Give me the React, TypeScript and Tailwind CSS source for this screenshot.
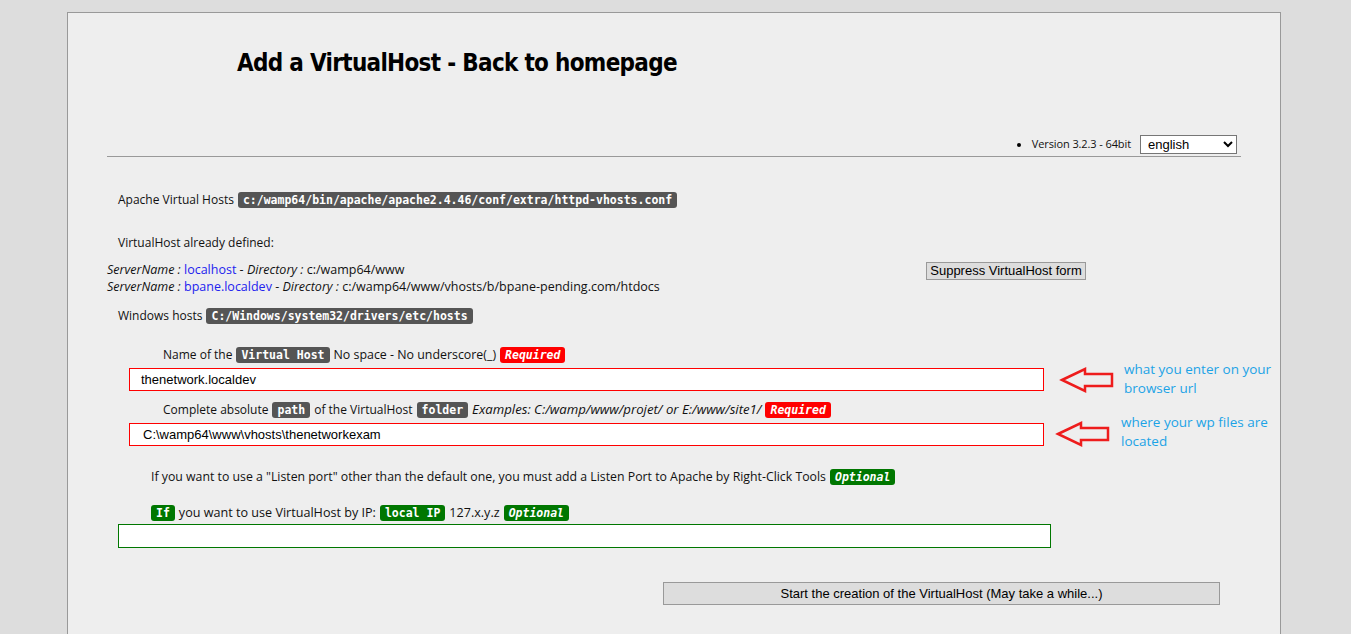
import React from 'react';

const body = "font-['Open_Sans','Noto_Sans',sans-serif]";
const mono = "font-['DejaVu_Sans_Mono','Liberation_Mono',monospace]";

function Tag({ children, tone = 'gray', italic = false }: { children: React.ReactNode; tone?: 'gray' | 'red' | 'green'; italic?: boolean }) {
  const bg = tone === 'red' ? 'bg-[#ff0000]' : tone === 'green' ? 'bg-[#007700]' : 'bg-[#555555]';
  return (
    <span
      className={`${bg} ${mono} ${italic ? 'italic' : ''} inline-block rounded-[3px] px-[5px] text-[11.5px] leading-[16px] font-semibold tracking-normal text-white`}
    >
      {children}
    </span>
  );
}

function Arrow() {
  return (
    <svg width="56" height="28" viewBox="0 0 56 28" className="shrink-0">
      <path d="M3 14 L26 3 L26 8 L53 8 L53 20 L26 20 L26 25 Z" fill="none" stroke="#ee1c1c" strokeWidth="2.5" strokeLinejoin="miter" />
    </svg>
  );
}

export default function App() {
  return (
    <div className="min-h-screen bg-[#dddddd] pt-[12px]">
      <div className={`${body} ml-[67px] w-[1214px] h-[640px] border border-[#999999] bg-[#eeeeee] text-[12px] text-[#111111]`}>
        {/* Header */}
        <h1 className="pl-[169px] pt-[36px] text-[24px] leading-[28px] font-bold text-black font-['DejaVu_Sans_Condensed','Open_Sans',sans-serif] tracking-[-0.7px]">
          Add a VirtualHost - Back to homepage
        </h1>

        <div className="mt-[58px] flex items-center justify-end pr-[43px]">
          <span className="mr-[11px] h-[4px] w-[4px] rounded-full bg-black" />
          <span className="text-[11px] tracking-[-0.1px]">Version 3.2.3 - 64bit</span>
          <select className="ml-[9px] h-[19px] w-[97px] border border-[#767676] bg-white px-[3px] text-[13px] font-['Liberation_Sans',sans-serif] text-black">
            <option>english</option>
          </select>
        </div>
        <div className="mx-[39px] mt-[2px] border-t border-[#999999]" />

        {/* Vhosts info */}
        <div className="mt-[34px] pl-[50px] flex items-center gap-[4px]">
          <span>Apache Virtual Hosts</span>
          <Tag>c:/wamp64/bin/apache/apache2.4.46/conf/extra/httpd-vhosts.conf</Tag>
        </div>
        <div className="mt-[25px] pl-[50px]">VirtualHost already defined:</div>

        <div className="mt-[9px] flex items-start pl-[39px]">
          <div className="w-[819px] text-[12.5px] leading-[17px]">
            <div>
              <i>ServerName :</i> <span className="text-[#2222ee]">localhost</span> - <i>Directory :</i> c:/wamp64/www
            </div>
            <div>
              <i>ServerName :</i> <span className="text-[#2222ee]">bpane.localdev</span> - <i>Directory :</i> c:/wamp64/www/vhosts/b/bpane-pending.com/htdocs
            </div>
          </div>
          <button className="mt-[1px] h-[18px] w-[160px] border border-[#999999] bg-[#dddddd] text-[13px] leading-[16px] font-['Liberation_Sans',sans-serif] text-black">
            Suppress VirtualHost form
          </button>
        </div>

        <div className="mt-[12px] pl-[50px] flex items-center gap-[4px]">
          <span>Windows hosts</span>
          <Tag>C:/Windows/system32/drivers/etc/hosts</Tag>
        </div>

        {/* Form */}
        <div className="mt-[21px] h-[18px] pl-[95px] flex items-center gap-[4px]">
          <span>Name of the</span>
          <Tag>Virtual Host</Tag>
          <span className="text-[12.4px]">No space - No underscore(_)</span>
          <Tag tone="red" italic>Required</Tag>
        </div>
        <div className="mt-[4px] flex h-[23px] items-start pl-[61px]">
          <div className="h-[23px] w-[915px] shrink-0 border border-[#ff0000] bg-white pl-[11px] text-[13px] leading-[21px] font-['Liberation_Sans',sans-serif] text-black">
            thenetwork.localdev
          </div>
          <div className="ml-[15px] mt-[-2px]"><Arrow /></div>
          <div className="ml-[9px] mt-[-8px] whitespace-nowrap text-[13.5px] leading-[19px] text-[#1ca3e6]">
            what you enter on your<br />browser url
          </div>
        </div>

        <div className="mt-[10px] h-[18px] pl-[95px] flex items-center gap-[4px]">
          <span>Complete absolute</span>
          <Tag>path</Tag>
          <span>of the VirtualHost</span>
          <Tag>folder</Tag>
          <i className="text-[13.2px]">Examples: C:/wamp/www/projet/ or E:/www/site1/</i>
          <Tag tone="red" italic>Required</Tag>
        </div>
        <div className="mt-[4px] flex h-[23px] items-start pl-[61px]">
          <div className="h-[23px] w-[915px] shrink-0 border border-[#ff0000] bg-white pl-[13px] text-[13px] leading-[21px] font-['Liberation_Sans',sans-serif] text-black">
            C:\wamp64\www\vhosts\thenetworkexam
          </div>
          <div className="ml-[11px] mt-[-3px]"><Arrow /></div>
          <div className="ml-[10px] mt-[-10px] whitespace-nowrap text-[13.5px] leading-[19px] text-[#1ca3e6]">
            where your wp files are<br />located
          </div>
        </div>

        <div className="mt-[22px] h-[18px] pl-[83px] flex items-center gap-[4px]">
          <span className="text-[12.3px]">If you want to use a "Listen port" other than the default one, you must add a Listen Port to Apache by Right-Click Tools</span>
          <Tag tone="green" italic>Optional</Tag>
        </div>

        <div className="mt-[18px] h-[18px] pl-[83px] flex items-center gap-[4px]">
          <Tag tone="green">If</Tag>
          <span className="text-[12.6px]">you want to use VirtualHost by IP:</span>
          <Tag tone="green">local IP</Tag>
          <span className="text-[12.6px]">127.x.y.z</span>
          <Tag tone="green" italic>Optional</Tag>
        </div>
        <div className="mt-[2px] ml-[50px] h-[24px] w-[933px] border border-[#007700] bg-white" />

        <div className="mt-[34px] ml-[595px] flex h-[23px] w-[557px] items-center justify-center border border-[#999999] bg-[#dddddd] text-[13px] font-['Liberation_Sans',sans-serif] text-black">
          Start the creation of the VirtualHost (May take a while...)
        </div>
      </div>
    </div>
  );
}
